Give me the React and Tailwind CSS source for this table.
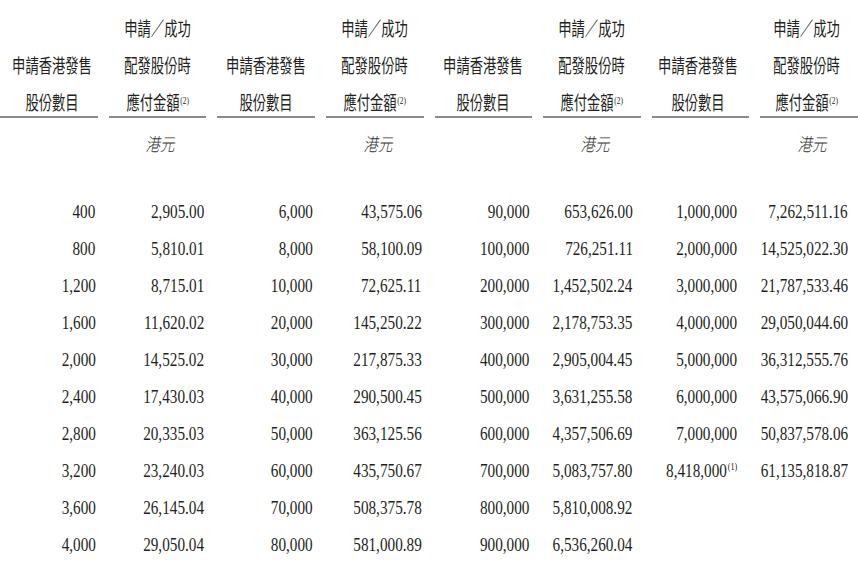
import React from "react";

const cols = [
  {
    kind: "qty",
    pr: "pr-[2px]",
    hs: "translate-x-[3px]",
    rows: ["400", "800", "1,200", "1,600", "2,000", "2,400", "2,800", "3,200", "3,600", "4,000"],
  },
  {
    kind: "amt",
    pr: "pr-[2px]",
    hs: "",
    rows: ["2,905.00", "5,810.01", "8,715.01", "11,620.02", "14,525.02", "17,430.03", "20,335.03", "23,240.03", "26,145.04", "29,050.04"],
  },
  {
    kind: "qty",
    pr: "pr-[2px]",
    hs: "",
    rows: ["6,000", "8,000", "10,000", "20,000", "30,000", "40,000", "50,000", "60,000", "70,000", "80,000"],
  },
  {
    kind: "amt",
    pr: "pr-[2px]",
    hs: "",
    rows: ["43,575.06", "58,100.09", "72,625.11", "145,250.22", "217,875.33", "290,500.45", "363,125.56", "435,750.67", "508,375.78", "581,000.89"],
  },
  {
    kind: "qty",
    pr: "pr-[3px]",
    hs: "",
    rows: ["90,000", "100,000", "200,000", "300,000", "400,000", "500,000", "600,000", "700,000", "800,000", "900,000"],
  },
  {
    kind: "amt",
    pr: "pr-[8px]",
    hs: "",
    rows: ["653,626.00", "726,251.11", "1,452,502.24", "2,178,753.35", "2,905,004.45", "3,631,255.58", "4,357,506.69", "5,083,757.80", "5,810,008.92", "6,536,260.04"],
  },
  {
    kind: "qty",
    pr: "pr-[12px]",
    hs: "-translate-x-[3px]",
    rows: ["1,000,000", "2,000,000", "3,000,000", "4,000,000", "5,000,000", "6,000,000", "7,000,000", "8,418,000|1"],
  },
  {
    kind: "amt",
    pr: "pr-[10px]",
    hs: "-translate-x-[3px]",
    rows: ["7,262,511.16", "14,525,022.30", "21,787,533.46", "29,050,044.60", "36,312,555.76", "43,575,066.90", "50,837,578.06", "61,135,818.87"],
  },
];

const cjk = "font-['Noto_Sans_CJK_TC','Noto_Sans_CJK_SC',sans-serif]";
const serif = "font-['Liberation_Serif','Times_New_Roman',serif]";

function HeadLine({ children, hs }) {
  return (
    <div className="h-[29px] leading-[29px] flex justify-center whitespace-nowrap">
      <span className={`inline-block text-[19px] ${cjk} scale-x-[0.7] origin-center ${hs}`}>{children}</span>
    </div>
  );
}

function Sup({ n }) {
  return (
    <span className={`${serif} text-[10.5px] leading-none align-[0.62em] ml-[1px]`}>({n})</span>
  );
}

function Column({ col }) {
  const lines =
    col.kind === "qty"
      ? [["申請香港發售"], ["股份數目"]]
      : [["申請／成功"], ["配發股份時"], ["應付金額", true]];
  return (
    <div className="flex flex-col">
      <div className="h-[116px] flex flex-col justify-end gap-[8px]">
        {lines.map(([t, s], i) => (
          <HeadLine key={i} hs={col.hs}>
            {t}
            {s ? <Sup n={2} /> : null}
          </HeadLine>
        ))}
      </div>
      <div className="h-[2px] bg-[#8a8a8a]" />
      <div className="mt-[7px] h-[37px] flex items-center justify-center">
        {col.kind === "amt" ? (
          <span className={`inline-block italic text-[18px] ${cjk} font-light scale-x-[0.8] translate-x-[3px] text-[#333]`}>港元</span>
        ) : null}
      </div>
      <div className="h-[31px]" />
      {col.rows.map((r, i) => {
        const [v, s] = r.split("|");
        return (
          <div key={i} className={`h-[37px] flex items-center justify-end whitespace-nowrap ${col.pr}`}>
            <span className={`inline-block ${serif} text-[19.5px] leading-none scale-x-[0.78] origin-right`}>
              {v}
              {s ? <Sup n={s} /> : null}
            </span>
          </div>
        );
      })}
    </div>
  );
}

export default function App() {
  return (
    <div className="w-[858px] h-[562px] bg-white text-[#231f20] overflow-hidden">
      <div className="grid grid-cols-8 gap-x-[11px]">
        {cols.map((c, i) => (
          <Column key={i} col={c} />
        ))}
      </div>
    </div>
  );
}
